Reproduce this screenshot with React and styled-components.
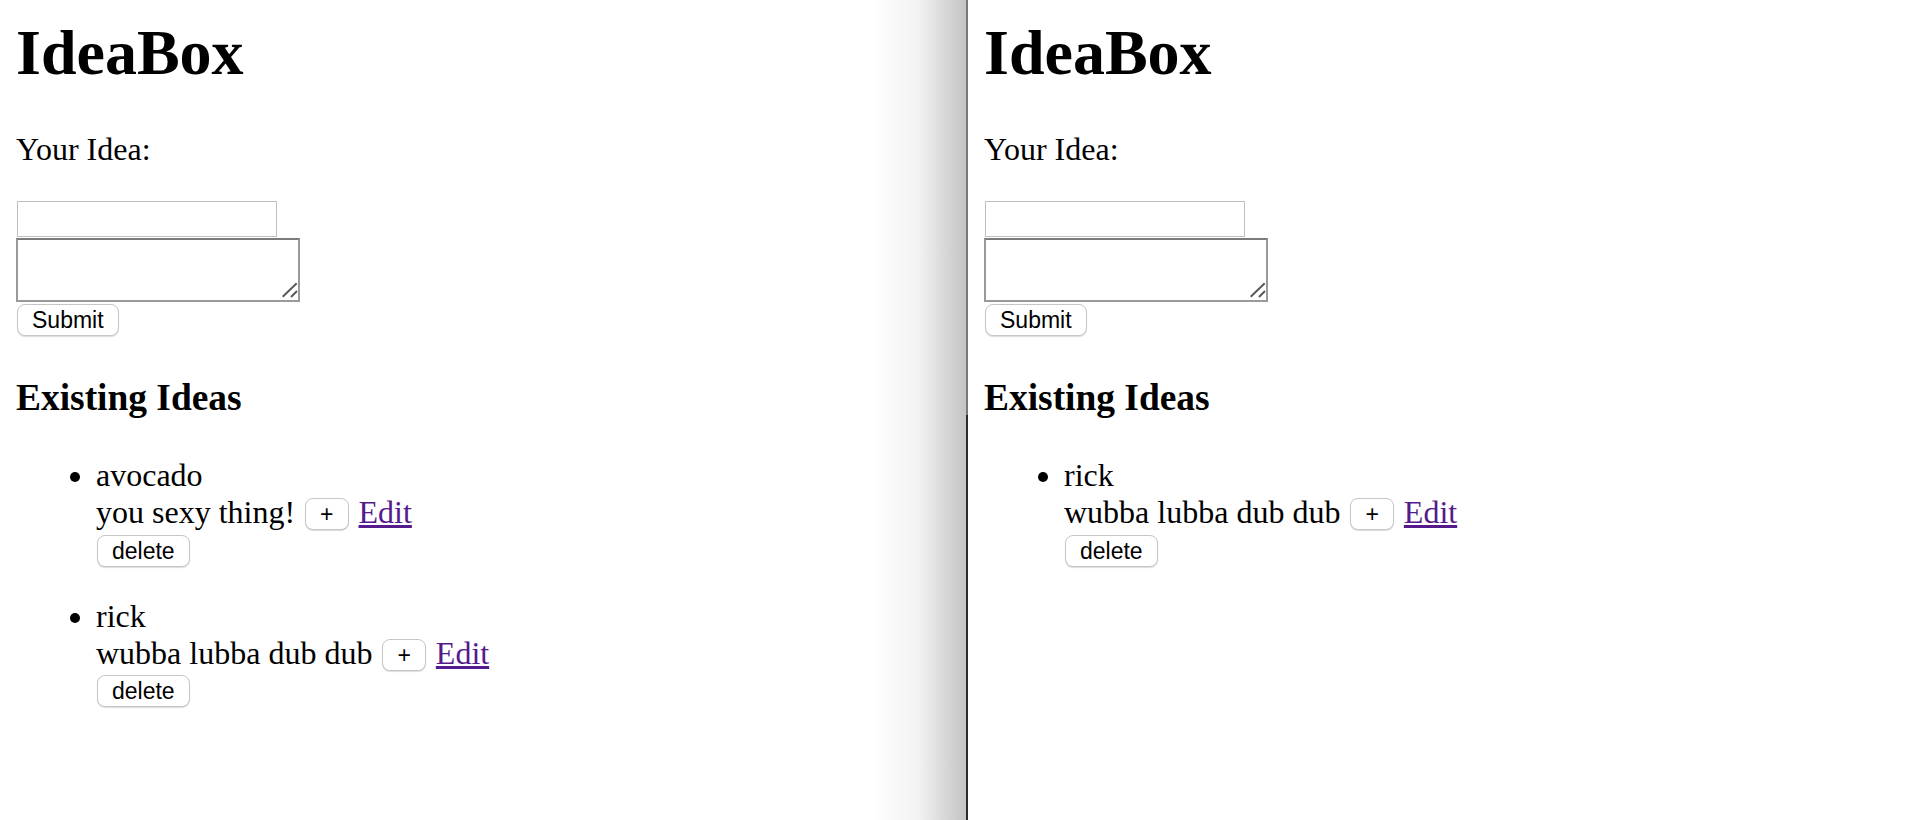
import React from "react";
import styled, { createGlobalStyle } from "styled-components";

const GlobalStyle = createGlobalStyle`
  html, body, #root {
    height: 100%;
  }

  body {
    margin: 0;
    background: #fff;
    color: #000;
    font-family: "Liberation Serif", "Times New Roman", serif;
  }
`;

const Screen = styled.div`
  display: flex;
  height: 100%;
  overflow: hidden;
`;

const Window = styled.section`
  flex: ${(p) => (p.$front ? "0 0 966px" : "1 1 auto")};
  box-sizing: border-box;
  padding: 0 16px;
  background: ${(p) =>
    p.$front
      ? "linear-gradient(to right, #fff calc(100% - 94px), #f2f2f2 calc(100% - 48px), #c4c4c4 100%)"
      : "#fff"};
`;

const Divider = styled.div`
  flex: 0 0 2px;
  background: linear-gradient(
    to bottom,
    #787878 0,
    #787878 415px,
    #2b2b2b 415px,
    #2b2b2b 100%
  );
`;

const Title = styled.h1`
  margin: 16px 0 0;
  font-size: 64px;
  line-height: 74px;
  font-weight: bold;
`;

const Label = styled.p`
  margin: 41px 0 0;
  font-size: 32px;
  line-height: 37px;
`;

const Form = styled.form`
  display: flex;
  flex-direction: column;
  align-items: flex-start;
  gap: 1px;
  margin-top: 33px;
`;

const TextInput = styled.input`
  box-sizing: border-box;
  width: 260px;
  height: 36px;
  margin: 0 0 0 1px;
  padding: 0 4px;
  border: 1px solid #bfbfbf;
  background: #fff;
  font: 26px "Liberation Sans", Arial, sans-serif;
  outline: none;
`;

const AreaWrap = styled.div`
  position: relative;
  width: 284px;
  height: 64px;
`;

const TextArea = styled.textarea`
  box-sizing: border-box;
  display: block;
  width: 100%;
  height: 100%;
  margin: 0;
  padding: 2px;
  border: 2px solid #9a9a9a;
  border-top-color: #7b7b7b;
  resize: none;
  outline: none;
  font: 26px "Liberation Mono", monospace;
`;

const Grip = styled.svg`
  position: absolute;
  right: 2px;
  bottom: 3px;
  width: 18px;
  height: 18px;
  pointer-events: none;
`;

const PushButton = styled.button`
  display: ${(p) => (p.$block ? "block" : "inline-block")};
  box-sizing: border-box;
  height: 32px;
  margin: ${(p) =>
    p.$inline ? "0 2px" : p.$block ? "3.5px 0 0 1px" : "1px 0 0 1px"};
  padding: 0 14px;
  border: 1px solid #c6c6c6;
  border-radius: 8px;
  background: #fff;
  box-shadow: 0 1px 1px rgba(0, 0, 0, 0.14);
  color: #000;
  font: 23px/31px "Liberation Sans", Arial, sans-serif;
  vertical-align: ${(p) => (p.$inline ? "1px" : "baseline")};
`;

const Subtitle = styled.h3`
  margin: 40px 0 0;
  font-size: 37.44px;
  line-height: 43px;
  font-weight: bold;
`;

const IdeaList = styled.ul`
  margin: 38px 0 0;
  padding-left: 80px;
  list-style: disc;
`;

const Idea = styled.li`
  font-size: 32px;
  line-height: 37px;
  margin-bottom: 31.2px;
`;

const IdeaTitle = styled.div``;

const IdeaBody = styled.div``;

const EditLink = styled.a`
  color: #551a8b;
  text-decoration: underline;
`;

function ResizeGrip() {
  return (
    <Grip viewBox="0 0 18 18">
      <path d="M2.7 15.7L16.7 2.3M11 16L17 10" stroke="#5a5a5a" strokeWidth="2" fill="none" />
    </Grip>
  );
}

function IdeaBox({ ideas, front }) {
  return (
    <Window $front={front}>
      <Title>IdeaBox</Title>
      <Label>Your Idea:</Label>
      <Form onSubmit={(e) => e.preventDefault()}>
        <TextInput type="text" />
        <AreaWrap>
          <TextArea />
          <ResizeGrip />
        </AreaWrap>
        <PushButton type="submit">Submit</PushButton>
      </Form>
      <Subtitle>Existing Ideas</Subtitle>
      <IdeaList>
        {ideas.map((idea) => (
          <Idea key={idea.title}>
            <IdeaTitle>{idea.title}</IdeaTitle>
            <IdeaBody>
              {idea.body} <PushButton $inline>+</PushButton>{" "}
              <EditLink href="#">Edit</EditLink>
            </IdeaBody>
            <PushButton $block>delete</PushButton>
          </Idea>
        ))}
      </IdeaList>
    </Window>
  );
}

const leftIdeas = [
  { title: "avocado", body: "you sexy thing!" },
  { title: "rick", body: "wubba lubba dub dub" },
];

const rightIdeas = [{ title: "rick", body: "wubba lubba dub dub" }];

export default function App() {
  return (
    <>
      <GlobalStyle />
      <Screen>
        <IdeaBox ideas={leftIdeas} front />
        <Divider />
        <IdeaBox ideas={rightIdeas} />
      </Screen>
    </>
  );
}
